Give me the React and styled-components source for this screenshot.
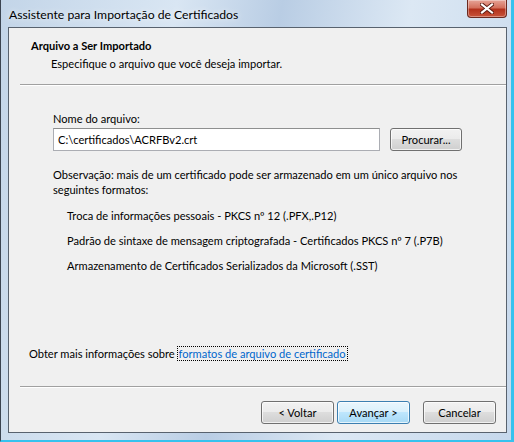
import React from 'react';
import styled, { createGlobalStyle } from 'styled-components';

const GlobalStyle = createGlobalStyle`
  html, body {
    margin: 0;
    padding: 0;
    background: #ffffff;
  }
`;

const Frame = styled.div`
  width: 514px;
  height: 442px;
  box-sizing: border-box;
  display: flex;
  flex-direction: column;
  border-left: 1px solid #3b4450;
  border-right: 3px solid #36c2ee;
  border-bottom: 2px solid #36c2ee;
  background: linear-gradient(100deg, #c3d5e8 0%, #d9e6f3 30%, #b9cde4 48%, #dce8f4 70%, #c6d8ec 100%);
  font-family: 'Segoe UI', Lato, 'Liberation Sans', sans-serif;
`;

const TitleBar = styled.div`
  height: 27px;
  display: flex;
  align-items: flex-start;
  justify-content: space-between;
  padding-left: 8px;
`;

const Title = styled.div`
  font-size: 12.2px;
  color: #000000;
  line-height: 15px;
  padding-top: 7px;
  text-shadow: 0 0 6px rgba(255, 255, 255, 0.9);
`;

const CloseButton = styled.div`
  width: 40px;
  height: 18px;
  margin-right: 4px;
  box-sizing: border-box;
  border: 1px solid #6b2a20;
  border-top: none;
  border-radius: 0 0 4px 4px;
  background: linear-gradient(180deg, #e6a497 0%, #d4715d 45%, #b3321c 55%, #c8543a 100%);
  display: flex;
  align-items: center;
  justify-content: center;
  box-shadow: inset 0 0 0 1px rgba(255, 255, 255, 0.35);
`;

const Client = styled.div`
  flex: 1;
  margin: 0 4px 7px 7px;
  border: 1px solid #58626e;
  background: #f0f0f0;
  display: flex;
  flex-direction: column;
  font-size: 11.1px;
  color: #000000;
`;

const Header = styled.div`
  height: 57px;
  box-sizing: border-box;
  padding: 10px 0 0 11px;
  border-bottom: 1px solid #a0a0a0;
  margin-left: 11px;
  display: flex;
  flex-direction: column;
  gap: 3px;
`;

const HeaderTitle = styled.div`
  font-weight: bold;
  line-height: 15px;
`;

const HeaderSub = styled.div`
  padding-left: 20px;
  line-height: 15px;
`;

const Body = styled.div`
  flex: 1;
  display: flex;
  flex-direction: column;
  padding: 25px 0 0 33px;
  border-top: 1px solid #ffffff;
  margin-left: 11px;
`;

const FieldLabel = styled.div`
  line-height: 15px;
  margin-bottom: 2px;
`;

const FieldRow = styled.div`
  display: flex;
  align-items: center;
  gap: 10px;
`;

const TextInput = styled.div`
  width: 327px;
  height: 23px;
  box-sizing: border-box;
  border: 1px solid #abadb3;
  border-top-color: #8e8f8f;
  background: #ffffff;
  padding: 3px 4px;
  line-height: 15px;
`;

const Button = styled.div`
  width: ${(p) => p.$w || 73}px;
  height: 23px;
  box-sizing: border-box;
  border: 1px solid ${(p) => (p.$default ? '#3c7fb1' : '#707070')};
  border-radius: 3px;
  background: ${(p) =>
    p.$default
      ? 'linear-gradient(180deg, #eaf6fd 0%, #d9f0fc 49%, #bee6fd 50%, #a7d9f5 100%)'
      : 'linear-gradient(180deg, #f2f2f2 0%, #ebebeb 49%, #dddddd 50%, #cfcfcf 100%)'};
  box-shadow: inset 0 0 0 1px rgba(255, 255, 255, 0.7);
  display: flex;
  align-items: center;
  justify-content: center;
  line-height: 15px;
`;

const Note = styled.div`
  margin-top: 16px;
  line-height: 15px;
  width: 410px;
`;

const FormatList = styled.div`
  display: flex;
  flex-direction: column;
  gap: 10px;
  padding-left: 14px;
  margin-top: 11px;
  line-height: 15px;
`;

const MoreInfo = styled.div`
  margin-top: auto;
  margin-left: -24px;
  line-height: 15px;
  margin-bottom: 25px;
`;

const Link = styled.span`
  color: #0066cc;
  outline: 1px dotted #000000;
  padding: 0 1px;
`;

const Footer = styled.div`
  margin-left: 11px;
  border-top: 1px solid #a0a0a0;
  box-shadow: inset 0 1px 0 #ffffff;
  height: 46px;
  box-sizing: border-box;
  padding: 14px 10px 0 0;
  display: flex;
  align-items: flex-start;
  justify-content: flex-end;
  gap: 3px;
`;

const Spacer = styled.div`
  width: 7px;
`;

const formats = [
  'Troca de informações pessoais - PKCS nº 12 (.PFX,.P12)',
  'Padrão de sintaxe de mensagem criptografada - Certificados PKCS nº 7 (.P7B)',
  'Armazenamento de Certificados Serializados da Microsoft (.SST)',
];

export default function App() {
  return (
    <>
      <GlobalStyle />
      <Frame>
        <TitleBar>
          <Title>Assistente para Importação de Certificados</Title>
          <CloseButton>
            <svg width="14" height="11" viewBox="0 0 14 11">
              <path
                d="M2 1.5 L12 9.5 M12 1.5 L2 9.5"
                stroke="#5a1a10"
                strokeWidth="4"
                strokeLinecap="square"
              />
              <path
                d="M2 1.5 L12 9.5 M12 1.5 L2 9.5"
                stroke="#ffffff"
                strokeWidth="2.2"
                strokeLinecap="square"
              />
            </svg>
          </CloseButton>
        </TitleBar>
        <Client>
          <Header>
            <HeaderTitle>Arquivo a Ser Importado</HeaderTitle>
            <HeaderSub>Especifique o arquivo que você deseja importar.</HeaderSub>
          </Header>
          <Body>
            <FieldLabel>Nome do arquivo:</FieldLabel>
            <FieldRow>
              <TextInput>C:\certificados\ACRFBv2.crt</TextInput>
              <Button $w={72}>Procurar...</Button>
            </FieldRow>
            <Note>
              Observação: mais de um certificado pode ser armazenado em um único arquivo nos
              seguintes formatos:
            </Note>
            <FormatList>
              {formats.map((f) => (
                <div key={f}>{f}</div>
              ))}
            </FormatList>
            <MoreInfo>
              Obter mais informações sobre <Link>formatos de arquivo de certificado</Link>
            </MoreInfo>
          </Body>
          <Footer>
            <Button>&lt; Voltar</Button>
            <Button $default>Avançar &gt;</Button>
            <Spacer />
            <Button>Cancelar</Button>
          </Footer>
        </Client>
      </Frame>
    </>
  );
}
